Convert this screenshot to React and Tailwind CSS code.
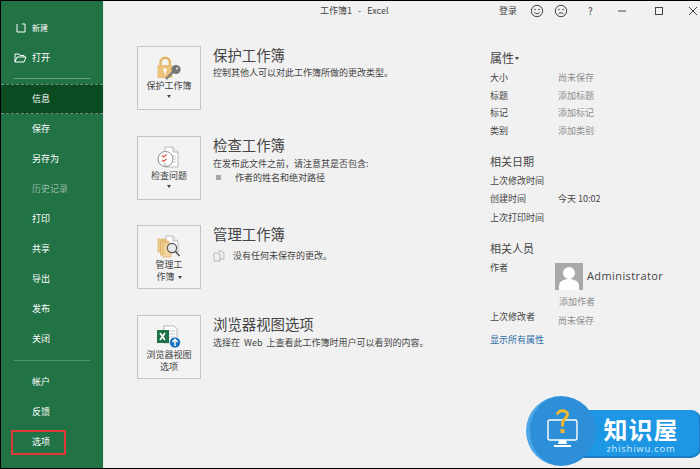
const cjk = 'font-["Noto_Sans_CJK_SC","Liberation_Sans",sans-serif]'

function NavItem({ label, active, dim, boxed }) {
    return (
        <div className={`relative h-[30px] flex items-center pl-[31px] text-[9px] ${active ? 'bg-[#0a4b22] border-y border-dashed border-[#6f8f7c]' : ''} ${dim ? 'text-[#93b8a2]' : 'text-white'}`}>
            {label}
            {boxed && <div className="absolute left-[10px] top-[3px] w-[55px] h-[25px] border-2 border-[#e23a3a]" />}
        </div>
    )
}

function LockIcon() {
    return (
        <svg width="24" height="24" viewBox="0 0 24 24">
            <path d="M3.5 10V6.5a4.7 4.7 0 0 1 9.4 0V10" fill="none" stroke="#e2b565" strokeWidth="2.4" />
            <rect x="0.5" y="9" width="15" height="13" rx="1" fill="#ecc27a" />
            <circle cx="8" cy="14" r="1.8" fill="#fff" />
            <rect x="7.3" y="14.5" width="1.4" height="4" fill="#fff" />
            <path d="M9 23l8-8" stroke="#7d7d7d" strokeWidth="2.4" />
            <circle cx="19" cy="13.5" r="4.6" fill="#757575" />
            <circle cx="20" cy="12.5" r="1" fill="#eee" />
        </svg>
    )
}

function InspectIcon() {
    return (
        <svg width="24" height="24" viewBox="0 0 24 24">
            <path d="M8 1h8l5 5v15H8z" fill="#fff" stroke="#a8a8a8" strokeWidth="0.8" />
            <path d="M16 1v5h5" fill="#eee" stroke="#a8a8a8" strokeWidth="0.8" />
            <path d="M16 10h3M16 13h3M16 16h3" stroke="#bbb" strokeWidth="0.8" />
            <circle cx="8.5" cy="13" r="7.5" fill="#fff" stroke="#8c8c8c" strokeWidth="1" />
            <path d="M5 9.5l1.5 1.5 3-2.5M5 14l1.5 1.5 3-2.5" fill="none" stroke="#d2553f" strokeWidth="1.1" />
            <path d="M8 17v3" stroke="#999" strokeWidth="1" />
        </svg>
    )
}

function ManageIcon() {
    return (
        <svg width="24" height="24" viewBox="0 0 24 24">
            <path d="M9 1h7l5 5v11H9z" fill="#fff" stroke="#a8a8a8" strokeWidth="0.8" />
            <path d="M16 1v5h5" fill="#eee" stroke="#a8a8a8" strokeWidth="0.8" />
            <rect x="1" y="4" width="8" height="13" fill="#eccb8f" stroke="#d9a95a" strokeWidth="0.6" />
            <rect x="3.5" y="6" width="8" height="14" fill="#eccb8f" stroke="#d9a95a" strokeWidth="0.6" />
            <rect x="6" y="8" width="8" height="14" fill="#f0d39d" stroke="#d9a95a" strokeWidth="0.6" />
            <circle cx="15" cy="13" r="4.6" fill="#e8e8e8" stroke="#555" strokeWidth="1.2" />
            <path d="M18.5 16.5l4 4.5" stroke="#555" strokeWidth="1.6" />
        </svg>
    )
}

function BrowserIcon() {
    return (
        <svg width="26" height="24" viewBox="0 0 26 24">
            <path d="M8 1h10l3 3v14H8z" fill="#fff" stroke="#a8a8a8" strokeWidth="0.8" />
            <path d="M13 6h6M13 9h6M13 12h6" stroke="#bbb" strokeWidth="0.8" />
            <rect x="1" y="5" width="12" height="13" fill="#1e7145" />
            <path d="M4 8l5 7M9 8l-5 7" stroke="#fff" strokeWidth="1.7" />
            <circle cx="19" cy="17.5" r="5.5" fill="#1d72c0" stroke="#fff" strokeWidth="0.6" />
            <path d="M19 21v-6M16.5 17l2.5-2.7 2.5 2.7" fill="none" stroke="#fff" strokeWidth="1.4" />
        </svg>
    )
}

function Caret({ inline }) {
    return <span className={`${inline ? 'inline-block ml-[1px] align-middle' : 'block mx-auto mt-[3px]'} w-0 h-0 border-x-[2.5px] border-x-transparent border-t-[3px] border-t-[#444]`} />
}

function Section({ icon, label, caret, title, children }) {
    return (
        <div className="flex h-[89.5px] items-start">
            <div className="w-16 h-16 shrink-0 border border-[#c4c4c4] bg-[#f3f3f3] flex flex-col items-center pt-[9px]">
                <div className="h-[24px] flex items-center">{icon}</div>
                <div className="text-[9px] leading-[12px] text-[#444] text-center">{label}</div>
                {caret && <Caret />}
            </div>
            <div className="ml-[12px] -mt-[1px]">
                <div className="text-[14.4px] leading-[20px] text-[#444]">{title}</div>
                {children}
            </div>
        </div>
    )
}

function Row({ name, value, valueClass = 'text-[#8d8d8d]', h = 'h-[17.5px]' }) {
    return (
        <div className={`flex items-center text-[9px] ${h}`}>
            <div className="w-[68px] text-[#444]">{name}</div>
            <div className={valueClass}>{value}</div>
        </div>
    )
}

function Face({ sad }) {
    return (
        <svg width="14" height="14" viewBox="0 0 14 14" fill="none" stroke="#444" strokeWidth="1">
            <circle cx="7" cy="7" r="5.7" />
            <circle cx="5" cy="5.5" r="0.8" fill="#444" stroke="none" />
            <circle cx="9" cy="5.5" r="0.8" fill="#444" stroke="none" />
            <path d={sad ? 'M4.5 10c1.4-1.6 3.6-1.6 5 0' : 'M4.3 8.3c1.4 1.9 4 1.9 5.4 0'} />
        </svg>
    )
}

function Logo() {
    return (
        <div className="absolute left-[525px] top-[395px] w-[175px] h-[70px]">
            <div className="absolute left-[50px] top-[14px] right-0 h-[48px] rounded-r-[10px] bg-[#1d96e3] border-b-2 border-r-2 border-[#1a7dc0]" />
            <div className="absolute left-0 top-0 w-[70px] h-[70px] rounded-full bg-[#2c8fd8] border-l-4 border-[#4aa6e6]" />
            <svg className="absolute left-[20px] top-[12px]" width="34" height="42" viewBox="0 0 34 42" fill="none">
                <rect x="2" y="12" width="29" height="20" rx="2" stroke="#fff" strokeWidth="1.4" />
                <path d="M13 32h7l1 4h-9z" fill="#fff" />
                <path d="M8 37h17v2H8z" fill="#fff" />
                <path d="M11.5 6.5c0-5 10-5 10 0 0 4-5 4-5 9v3" stroke="#f6b92d" strokeWidth="3" />
                <rect x="14.5" y="21" width="4" height="4" fill="#f6b92d" />
            </svg>
            <div className="absolute left-[71px] top-[21px] w-[88px] text-center text-white text-[24px] leading-[24px] font-bold tracking-[1px] whitespace-nowrap">知识屋</div>
            <div className="absolute left-[71px] top-[47px] w-[88px] text-center text-[#d3ecfb] text-[9.5px] leading-[11px] tracking-[0.75px] font-['Open_Sans',sans-serif]">zhishiwu.com</div>
        </div>
    )
}

export default function App() {
    return (
        <div className={`relative flex w-[700px] h-[469px] overflow-hidden border-y border-l border-black bg-[#f1f1f1] ${cjk}`}>
            <aside className="w-[103px] shrink-0 bg-[#217346] border-r border-[#dfe9e3] pt-[12px]">
                <div className="h-[30px] flex items-center pl-[15px] text-[8px] text-white">
                    <svg width="10" height="10" viewBox="0 0 10 10" fill="none" stroke="#fff" strokeWidth="1" className="mr-[6px]">
                        <path d="M1 1v8h8V1" />
                        <path d="M6 1h3" />
                    </svg>
                    新建
                </div>
                <div className="h-[30px] flex items-center pl-[13px] text-[9px] text-white">
                    <svg width="13" height="10" viewBox="0 0 13 10" fill="none" stroke="#fff" strokeWidth="1" className="mr-[5px]">
                        <path d="M1 9V1h4l1 1.5h4V4M1 9h9l2-5H3z" />
                    </svg>
                    打开
                </div>
                <div className="mx-[13px] mt-[5px] mb-[5px] h-px bg-[#69a184]" />
                <NavItem label="信息" active />
                <NavItem label="保存" />
                <NavItem label="另存为" />
                <NavItem label="历史记录" dim />
                <NavItem label="打印" />
                <NavItem label="共享" />
                <NavItem label="导出" />
                <NavItem label="发布" />
                <NavItem label="关闭" />
                <div className="mx-[13px] mt-[6px] mb-[6px] h-px bg-[#4f9470]" />
                <NavItem label="帐户" />
                <NavItem label="反馈" />
                <NavItem label="选项" boxed />
            </aside>

            <main className="flex-1 flex flex-col text-[#444]">
                <header className="h-[19px] flex items-center text-[9px] text-[#444]">
                    <div className="ml-[216px] w-[80px] whitespace-pre">工作簿1   -   Excel</div>
                    <div className="ml-[99px]">登录</div>
                    <div className="ml-[13px]"><Face /></div>
                    <div className="ml-[10px]"><Face sad /></div>
                    <div className="ml-[20px] text-[10px] w-[8px]">?</div>
                    <svg width="10" height="10" viewBox="0 0 10 10" className="ml-[21px]"><path d="M1 5h8" stroke="#444" /></svg>
                    <svg width="10" height="10" viewBox="0 0 10 10" className="ml-[27px]"><rect x="1.5" y="1.5" width="7" height="7" fill="none" stroke="#444" /></svg>
                    <svg width="10" height="10" viewBox="0 0 10 10" className="ml-[24px]"><path d="M1 1l8 8M9 1l-8 8" stroke="#444" /></svg>
                </header>

                <div className="flex pt-[26px]">
                    <div className="ml-[33px] w-[353px]">
                        <Section icon={<LockIcon />} label="保护工作簿" caret title="保护工作簿">
                            <div className="mt-[2px] text-[9px] leading-[12px]">控制其他人可以对此工作簿所做的更改类型。</div>
                        </Section>
                        <Section icon={<InspectIcon />} label="检查问题" caret title="检查工作簿">
                            <div className="mt-[2px] text-[9px] leading-[14px]">在发布此文件之前，请注意其是否包含:</div>
                            <div className="flex items-center text-[9px] leading-[14px]">
                                <span className="ml-[3px] mr-[14px] w-[5px] h-[5px] bg-[#a6a6a6]" />
                                作者的姓名和绝对路径
                            </div>
                        </Section>
                        <Section icon={<ManageIcon />} label={<>管理工<br />作簿 <Caret inline /></>} title="管理工作簿">
                            <div className="flex items-center text-[9px] leading-[14px] mt-[5px]">
                                <svg width="12" height="12" viewBox="0 0 12 12" fill="none" stroke="#aaa" strokeWidth="0.8" className="mr-[8px]">
                                    <path d="M1 3h5l1 1v7H1zM5 1h4l2 2v6H7" />
                                </svg>
                                没有任何未保存的更改。
                            </div>
                        </Section>
                        <Section icon={<BrowserIcon />} label={<>浏览器视图<br />选项</>} title="浏览器视图选项">
                            <div className="mt-[3px] text-[9px] leading-[12px] whitespace-pre">选择在  Web  上查看此工作簿时用户可以看到的内容。</div>
                        </Section>
                    </div>

                    <div className="mt-[2px] w-[190px]">
                        <div className="flex items-center text-[12px] leading-[18px] h-[20px]">属性<Caret inline /></div>
                        <div className="mt-[1px]">
                            <Row name="大小" value="尚未保存" />
                            <Row name="标题" value="添加标题" />
                            <Row name="标记" value="添加标记" />
                            <Row name="类别" value="添加类别" />
                        </div>
                        <div className="mt-[13px] h-[18px] flex items-center text-[11px]">相关日期</div>
                        <div className="mt-[1px]">
                            <Row name="上次修改时间" h="h-[18.5px]" />
                            <Row name="创建时间" value="今天 10:02" valueClass="text-[#444]" h="h-[18.5px]" />
                            <Row name="上次打印时间" h="h-[18.5px]" />
                        </div>
                        <div className="mt-[13px] h-[18px] flex items-center text-[11px]">相关人员</div>
                        <div className="flex mt-[1px] h-[24px]">
                            <div className="w-[65px] text-[9px] leading-[18px]">作者</div>
                            <div className="flex h-[27px] mt-[4px] items-center">
                                <svg width="28" height="27" viewBox="0 0 28 27" className="shrink-0">
                                    <rect width="28" height="27" fill="#a9a9a9" />
                                    <circle cx="14" cy="10" r="6" fill="#fff" />
                                    <path d="M4 27v-4c0-5 5-7 10-7s10 2 10 7v4z" fill="#fff" />
                                </svg>
                                <span className="ml-[4px] text-[11px] font-['Open_Sans',sans-serif] tracking-[0.4px]">Administrator</span>
                            </div>
                        </div>
                        <div className="mt-[10px] ml-[69px] h-[18px] flex items-center text-[9px] text-[#8d8d8d]">添加作者</div>
                        <div className="flex items-start h-[18px] -mt-[3px] text-[9px]">
                            <div className="w-[68px] leading-[18px]">上次修改者</div>
                            <div className="mt-[4px] leading-[18px] text-[#8d8d8d]">尚未保存</div>
                        </div>
                        <div className="mt-[5px] h-[18px] flex items-center text-[9px] text-[#2f6fa8]">显示所有属性</div>
                    </div>
                </div>
            </main>
            <Logo />
        </div>
    )
}
